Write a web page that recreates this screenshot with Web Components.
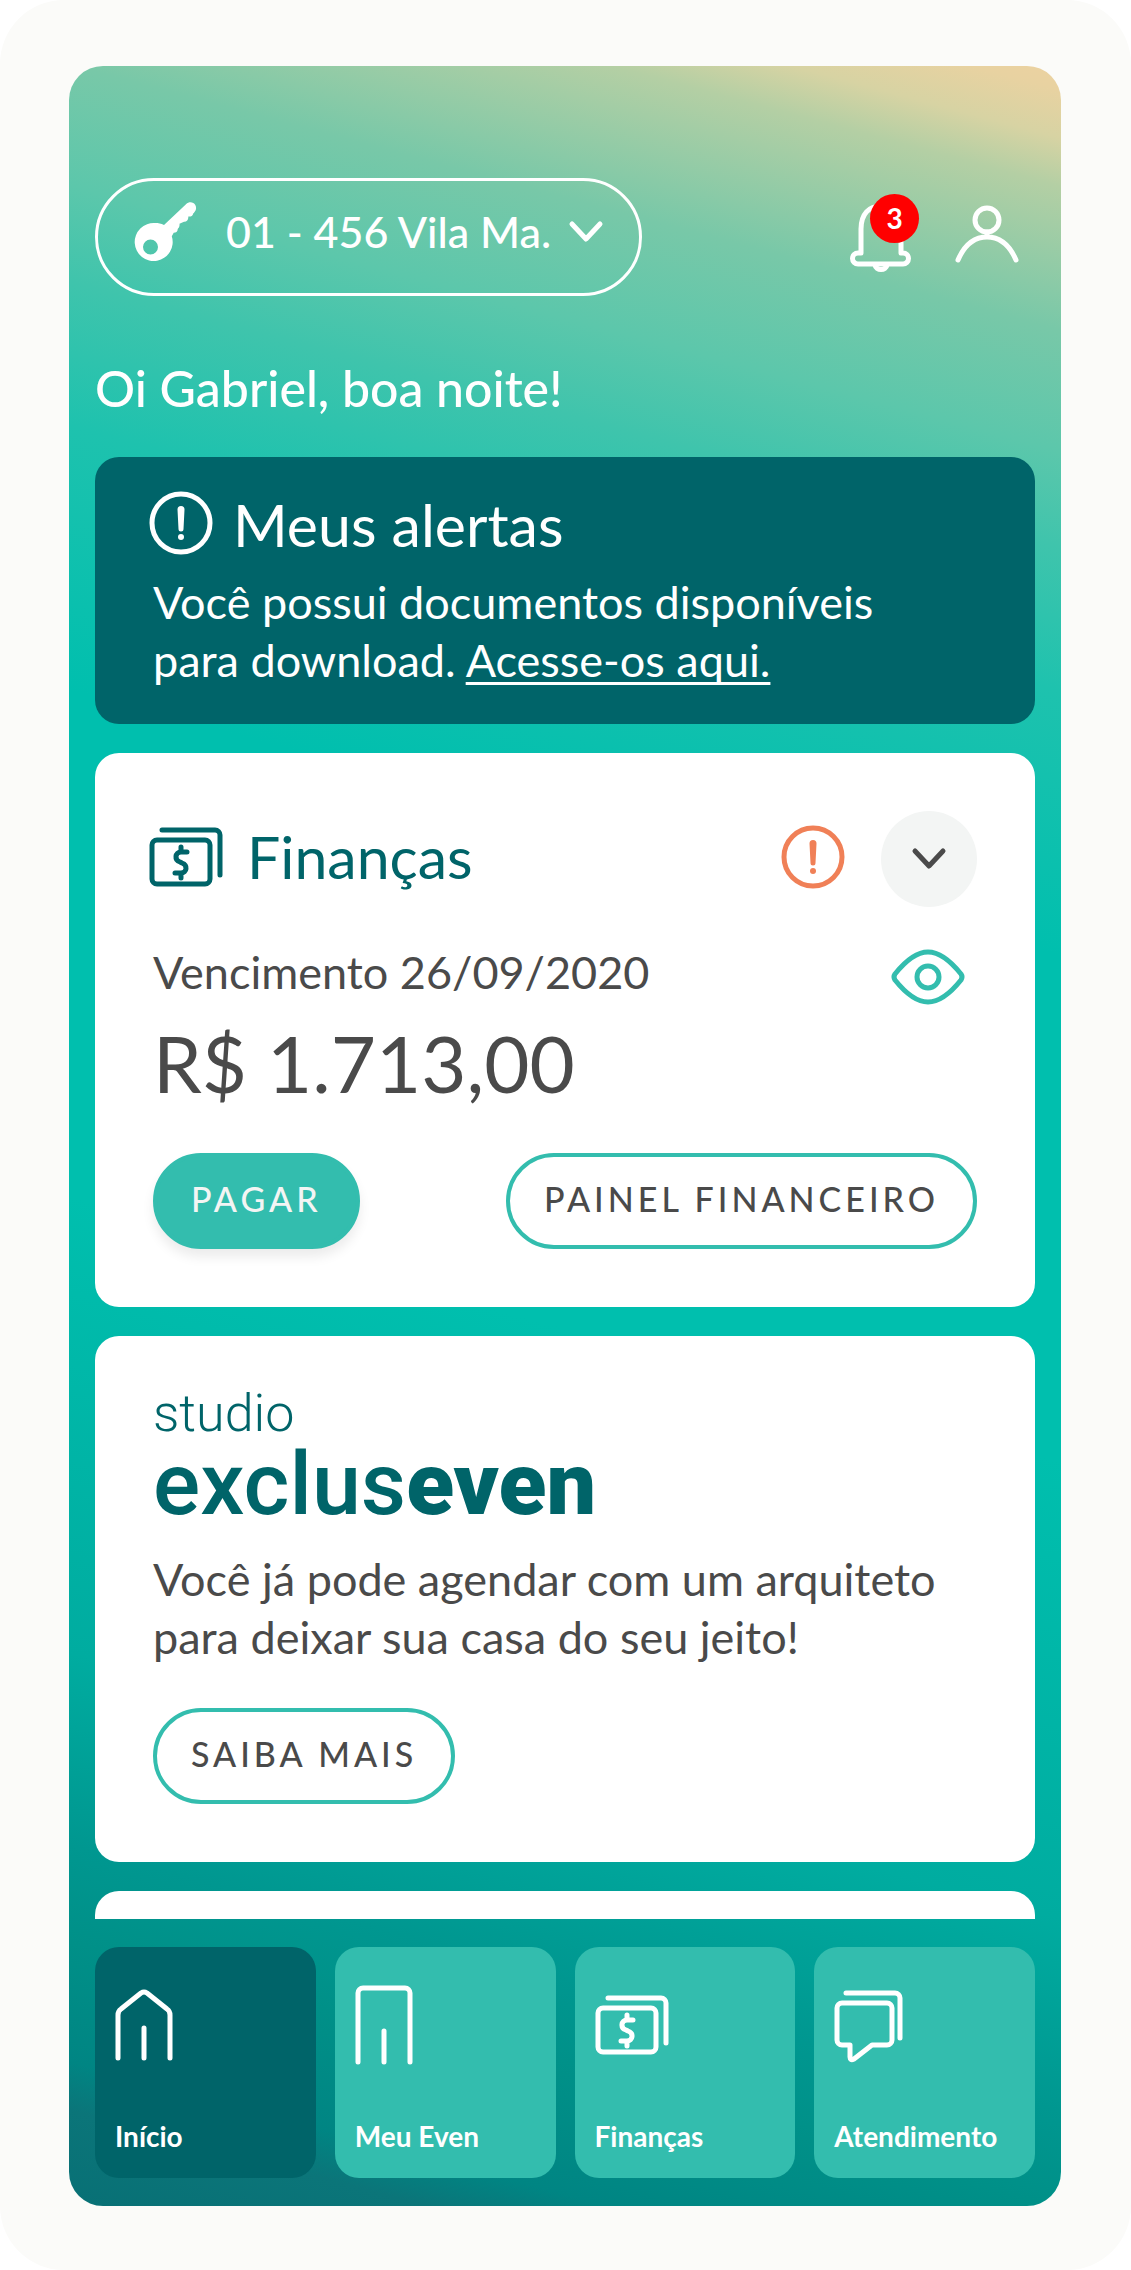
<!DOCTYPE html>
<html lang="pt-BR">
<head>
<meta charset="utf-8">
<meta name="viewport" content="width=device-width, initial-scale=1">
<title>Even - Início</title>
<style>
  html {
    --teal: #33bdae;
    --petrol: #006469;
    --ink: #4a4a4a;
    --orange: #f08057;
    --text: 45px;
    --title: 59px;
    background: #fff;
  }

  body {
    margin: 0;
    font-family: Lato, "Open Sans", sans-serif;
    color: var(--ink);
  }

  p, h1, h2 {
    margin: 0;
    font-weight: 400;
  }

  .lead {
    font-size: var(--text);
    line-height: 58px;
  }
</style>
</head>
<body>

<app-shell>
  <app-header slot="header" count="3">01 - 456 Vila Ma.</app-header>

  <app-greeting>Oi Gabriel, boa noite!</app-greeting>

  <alert-card heading="Meus alertas">
    Você possui documentos disponíveis para download. <a href="#documentos">Acesse-os aqui.</a>
  </alert-card>

  <finance-card heading="Finanças" due="Vencimento 26/09/2020" amount="R$ 1.713,00">
    <app-button variant="solid">PAGAR</app-button>
    <app-button>PAINEL FINANCEIRO</app-button>
  </finance-card>

  <studio-card>
    <p class="lead">Você já pode agendar com um arquiteto para deixar sua casa do seu jeito!</p>
    <app-button slot="action">SAIBA MAIS</app-button>
  </studio-card>

  <card-peek></card-peek>

  <nav-bar slot="footer">
    <nav-item icon="home" href="#inicio" active>Início</nav-item>
    <nav-item icon="building" href="#meu-even">Meu Even</nav-item>
    <nav-item icon="money" href="#financas">Finanças</nav-item>
    <nav-item icon="chat" href="#atendimento">Atendimento</nav-item>
  </nav-bar>
</app-shell>

<script>
const icons = {
  key: {
    size: [60, 60],
    body: `
      <path fill="currentColor" stroke="none" fill-rule="evenodd" d="M19 21c3.500 0 6 .4 9 1.900L50 2.200c3-3 7.500-2.500 9.300.8 1.500 2.800.8 5.700-1.300 7.700l-1 1c.2 1.800-2.400 3.200-4.700 2.800.3 2.800-1.400 5.300-4.300 5.200l-4.500 2c.4 3-1 4.300-1.800 5.300.1 2.700-1.800 3.700-4 3.700l-1.900 3.500A19 19 0 1 1 19 21zM14.500 37.500a7.500 7.500 0 1 0 0 15 7.500 7.500 0 0 0 0-15z"/>`,
  },
  chevron: {
    size: [34, 22],
    body: '<path d="M3 3l14 15L31 3"/>',
  },
  bell: {
    size: [64, 70],
    body: `
      <path d="M12 51V27C12 12 20 4 32 4s20 8 20 23v24h2a5.500 5.500 0 0 1 0 11H9a5.500 5.500 0 0 1 0-11z"/>
      <path d="M26 63c1 6 11 6 12 0"/>`,
  },
  person: {
    size: [64, 62],
    body: `
      <circle cx="32" cy="18" r="12"/>
      <path d="M32 30v5M3 58C9 44 19 35 32 35s23 9 29 23"/>`,
  },
  alert: {
    size: [64, 64],
    body: `
      <circle cx="32" cy="32" r="29"/>
      <path fill="currentColor" stroke="none" d="M28.500 18.500a3.500 3.500 0 0 1 7 0L34.500 38a2.500 2.500 0 0 1-5 0z"/>
      <circle cx="32" cy="46" r="3" fill="currentColor" stroke="none"/>`,
  },
  money: {
    size: [74, 60],
    body: `
      <rect x="3" y="13" width="58" height="44" rx="5"/>
      <path d="M13 3h53a5 5 0 0 1 5 5v40"/>
      <path d="M38 25h-6c-6 0-7 8-1 10l2 1c6 2 5 10-1 10h-6M32 20v4M32 47v4"/>`,
  },
  eye: {
    size: [74, 56],
    body: `
      <path d="M4 25C16 10 26 3 37 3s21 7 33 22q2 3 0 6C58 46 48 53 37 53S16 46 4 31q-2-3 0-6z"/>
      <circle cx="37" cy="28" r="11"/>`,
  },
  home: {
    size: [58, 72],
    body: `
      <path d="M3 69V26q0-4 3-6L26 4q3-2 6 0l20 16q3 2 3 6v43M29 39v30"/>`,
  },
  building: {
    size: [58, 80],
    body: '<path d="M3 77V8a5 5 0 0 1 5-5h42a5 5 0 0 1 5 5v69M29 46v31"/>',
  },
  chat: {
    size: [68, 70],
    body: `
      <path d="M8 13h45a5 5 0 0 1 5 5v32a5 5 0 0 1-5 5H38L20 69q-4 2-4-2V55H8a5 5 0 0 1-5-5V18a5 5 0 0 1 5-5z"/>
      <path d="M12 3h49a5 5 0 0 1 5 5v40"/>`,
  },
};

function attach(host, html) {
  const template = document.createElement('template');
  template.innerHTML = html;
  const root = host.attachShadow({ mode: 'open' });
  root.append(template.content.cloneNode(true));
  return root;
}

class AppIcon extends HTMLElement {
  connectedCallback() {
    if (this.shadowRoot) return;
    const { size: [w, h], body } = icons[this.getAttribute('name')];

    attach(this, `
      <style>
        :host { display: block; flex: none; }
        svg {
          display: block;
          overflow: visible;
          fill: none;
          stroke: currentColor;
          stroke-width: 5;
          stroke-linecap: round;
          stroke-linejoin: round;
        }
      </style>
      <svg width="${w}" height="${h}" viewBox="0 0 ${w} ${h}" aria-hidden="true">${body}</svg>
    `);
  }
}

class AppShell extends HTMLElement {
  connectedCallback() {
    attach(this, `
      <style>
        :host {
          display: flex;
          box-sizing: border-box;
          min-height: 100vh;
          padding: 66px 70px 64px 69px;
          background: #fbfbf9;
          border-radius: 64px;
        }
        .screen {
          flex: 1;
          min-width: 0;
          display: flex;
          flex-direction: column;
          gap: 28px;
          padding: 112px 26px 28px;
          border-radius: 34px;
          background: linear-gradient(195deg,
            #ecd2a1 0%, #e8d2a1 1%, #d7d3a3 3%, #b4cfa4 5%, #78c8a8 11%, #5cc7ab 16%, #3fc4ac 20%, #1ec2ae 26%,
            #00bfae 37%, #00bfae 58%, #00aca0 77%, #009790 85%, #009088 89%, #008583 94%, #0b7579 96%, #087075 100%);
        }
        main {
          flex: 1;
          display: flex;
          flex-direction: column;
          gap: 29px;
        }
      </style>
      <div class="screen">
        <slot name="header"></slot>
        <main><slot></slot></main>
        <slot name="footer"></slot>
      </div>
    `);
  }
}

class AppHeader extends HTMLElement {
  connectedCallback() {
    const root = attach(this, `
      <style>
        :host {
          display: flex;
          align-items: center;
          justify-content: space-between;
          color: #fff;
        }
        .unit {
          display: flex;
          align-items: center;
          box-sizing: border-box;
          height: 118px;
          padding: 0 36px 10px 38px;
          border: 3px solid #fff;
          border-radius: 60px;
        }
        select {
          appearance: none;
          margin: 0 16px 0 30px;
          padding: 0;
          border: 0;
          background: none;
          color: inherit;
          font: 500 43px/56px Lato, sans-serif;
        }
        option { color: var(--ink); }
        .actions {
          display: flex;
          align-items: flex-start;
          gap: 42px;
          padding-right: 16px;
        }
        button {
          position: relative;
          padding: 0;
          border: 0;
          background: none;
          color: inherit;
        }
        .badge {
          position: absolute;
          top: -8px;
          left: 21px;
          width: 49px;
          border-radius: 50%;
          background: #f00;
          font: 700 28px/49px Lato, sans-serif;
          text-align: center;
        }
      </style>
      <label class="unit">
        <app-icon name="key"></app-icon>
        <select aria-label="Unidade"><option></option></select>
        <app-icon name="chevron"></app-icon>
      </label>
      <div class="actions">
        <button type="button" aria-label="Notificações">
          <app-icon name="bell"></app-icon>
          <span class="badge"></span>
        </button>
        <button type="button" aria-label="Perfil"><app-icon name="person"></app-icon></button>
      </div>
    `);
    root.querySelector('option').textContent = this.textContent;
    root.querySelector('.badge').textContent = this.getAttribute('count');
  }
}

class AppGreeting extends HTMLElement {
  connectedCallback() {
    attach(this, `
      <style>
        :host { display: block; padding: 33px 0 9px; color: #fff; }
        h1 { margin: 0; font-size: 50px; line-height: 62px; font-weight: 500; }
      </style>
      <h1><slot></slot></h1>
    `);
  }
}

class AlertCard extends HTMLElement {
  connectedCallback() {
    const root = attach(this, `
      <style>
        :host {
          display: block;
          padding: 32px 58px;
          border-radius: 24px;
          background: var(--petrol);
          color: #fff;
        }
        header { display: flex; align-items: center; gap: 20px; margin-left: -4px; }
        app-icon { padding-bottom: 4px; }
        h2 { margin: 0; font-size: var(--title); line-height: 72px; font-weight: 400; }
        p { margin: 12px 48px 3px 0; font-size: var(--text); line-height: 58px; }
        ::slotted(a) { color: inherit; text-underline-offset: 5px; text-decoration-thickness: 3px; text-decoration-skip-ink: none; }
      </style>
      <header><app-icon name="alert"></app-icon><h2></h2></header>
      <p><slot></slot></p>
    `);
    root.querySelector('h2').textContent = this.getAttribute('heading');
  }
}

class FinanceCard extends HTMLElement {
  connectedCallback() {
    const root = attach(this, `
      <style>
        :host {
          display: block;
          padding: 58px;
          border-radius: 24px;
          background: #fff;
        }
        .row { display: flex; align-items: center; }
        .title { gap: 24px; margin-left: -4px; color: var(--petrol); }
        .title app-icon, h2 { padding-bottom: 4px; }
        h2 { flex: 1; margin: 0; font-size: var(--title); line-height: 72px; font-weight: 400; }
        button { padding: 0; border: 0; background: none; color: inherit; }
        .toggle {
          display: grid;
          place-content: center;
          width: 96px;
          height: 96px;
          margin-left: 12px;
          border-radius: 50%;
          background: #f3f5f4;
          color: var(--ink);
        }
        .toggle app-icon { padding: 0; }
        .alert { color: var(--orange); }
        .due {
          align-items: flex-start;
          justify-content: space-between;
          margin-top: 36px;
          padding-right: 12px;
          font-size: var(--text);
          line-height: 58px;
        }
        .eye { padding-top: 6px; color: var(--teal); }
        p { margin: 0; }
        .amount { font-size: 78px; line-height: 96px; margin: 10px 0 42px; }
        .actions { display: flex; justify-content: space-between; }
      </style>
      <div class="row title">
        <app-icon name="money"></app-icon>
        <h2></h2>
        <app-icon class="alert" name="alert"></app-icon>
        <button class="toggle" type="button" aria-label="Abrir"><app-icon name="chevron"></app-icon></button>
      </div>
      <div class="row due">
        <p></p>
        <button class="eye" type="button" aria-label="Ocultar valor"><app-icon name="eye"></app-icon></button>
      </div>
      <p class="amount"></p>
      <div class="actions"><slot></slot></div>
    `);
    root.querySelector('h2').textContent = this.getAttribute('heading');
    root.querySelector('.due p').textContent = this.getAttribute('due');
    root.querySelector('.amount').textContent = this.getAttribute('amount');
  }
}

class StudioCard extends HTMLElement {
  connectedCallback() {
    attach(this, `
      <style>
        :host {
          display: block;
          padding: 48px 58px 58px;
          border-radius: 24px;
          background: #fff;
        }
        .logo { margin: 0 0 26px; color: var(--petrol); font-family: Roboto, sans-serif; }
        .logo span { display: block; }
        .small { font-size: 52px; line-height: 60px; font-weight: 300; }
        .big { font-size: 88px; line-height: 80px; font-weight: 500; }
        b { font-weight: 900; }
        .action { display: flex; margin-top: 42px; }
      </style>
      <h2 class="logo"><span class="small">studio</span><span class="big">exclus<b>even</b></span></h2>
      <slot></slot>
      <div class="action"><slot name="action"></slot></div>
    `);
  }
}

// top edge of the card that is still below the fold
class CardPeek extends HTMLElement {
  connectedCallback() {
    attach(this, `
      <style>
        :host {
          display: block;
          flex: 1;
          min-height: 28px;
          border-radius: 24px 24px 0 0;
          background: #fff;
        }
      </style>
    `);
  }
}

class AppButton extends HTMLElement {
  connectedCallback() {
    attach(this, `
      <style>
        :host { display: block; }
        button {
          box-sizing: border-box;
          height: 96px;
          padding: 0 34px 4px;
          border: 4px solid var(--teal);
          border-radius: 48px;
          background: none;
          color: var(--ink);
          font: 500 34px/40px Lato, sans-serif;
          letter-spacing: 4px;
        }
        :host([variant="solid"]) button {
          background: var(--teal);
          color: #f3f5f4;
          box-shadow: 0 8px 12px rgba(0, 0, 0, .08);
        }
      </style>
      <button type="button"><slot></slot></button>
    `);
  }
}

class NavBar extends HTMLElement {
  connectedCallback() {
    attach(this, `
      <style>
        :host { display: block; }
        nav { display: grid; grid-template-columns: repeat(4, 1fr); gap: 19px; }
      </style>
      <nav><slot></slot></nav>
    `);
  }
}

class NavItem extends HTMLElement {
  connectedCallback() {
    attach(this, `
      <style>
        :host { display: block; min-width: 0; }
        a {
          display: flex;
          flex-direction: column;
          justify-content: space-between;
          box-sizing: border-box;
          height: 231px;
          padding: 34px 20px 24px;
          border-radius: 24px;
          background: var(--teal);
          color: #fff;
          font-size: 28px;
          line-height: 36px;
          font-weight: 700;
          text-decoration: none;
        }
        :host([active]) a { background: var(--petrol); }
        .icon { display: flex; align-items: center; height: 88px; }
      </style>
      <a href="${this.getAttribute('href')}">
        <span class="icon"><app-icon name="${this.getAttribute('icon')}"></app-icon></span>
        <span><slot></slot></span>
      </a>
    `);
  }
}

customElements.define('app-icon', AppIcon);
customElements.define('app-shell', AppShell);
customElements.define('app-header', AppHeader);
customElements.define('app-greeting', AppGreeting);
customElements.define('alert-card', AlertCard);
customElements.define('finance-card', FinanceCard);
customElements.define('studio-card', StudioCard);
customElements.define('card-peek', CardPeek);
customElements.define('app-button', AppButton);
customElements.define('nav-bar', NavBar);
customElements.define('nav-item', NavItem);
</script>
</body>
</html>
